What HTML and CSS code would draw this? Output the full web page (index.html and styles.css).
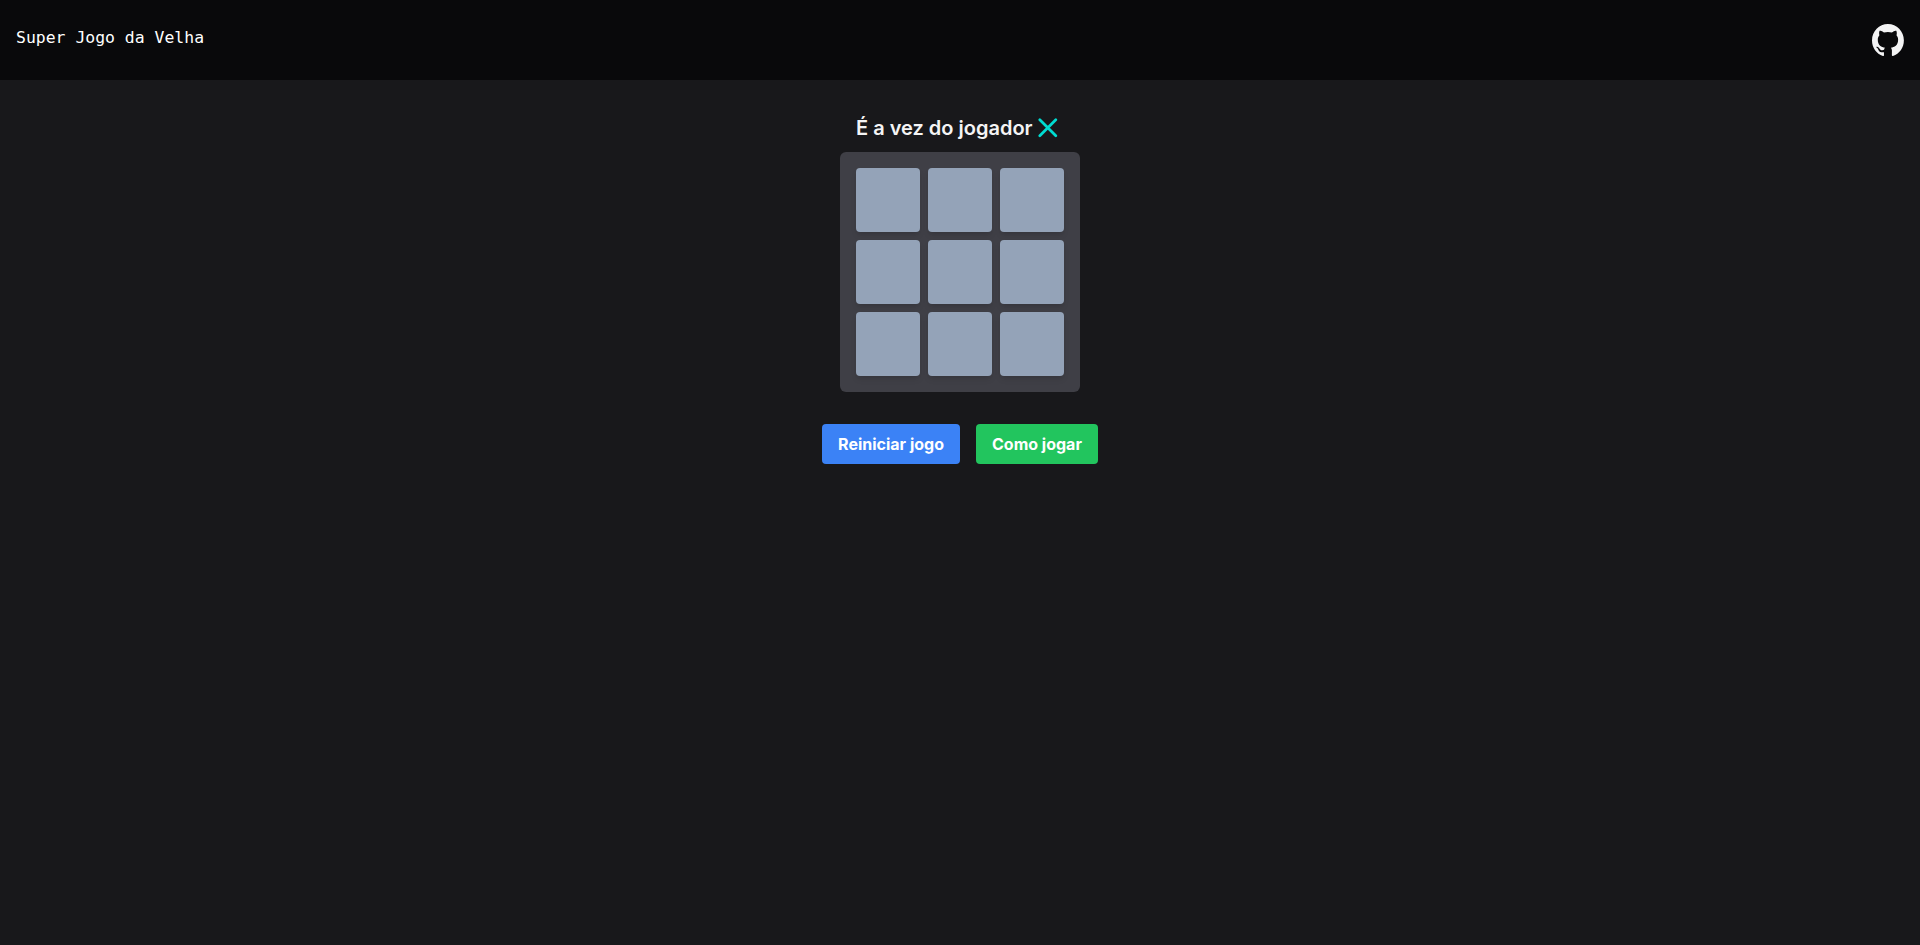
FILE: index.html
```
<!DOCTYPE html>
<html lang="pt-BR">
<head>
<meta charset="utf-8">
<title>Super Jogo da Velha</title>
<link rel="stylesheet" href="styles.css">
</head>
<body>
<header class="header">
  <h1 class="brand">Super Jogo da Velha</h1>
  <a class="github" href="#" aria-label="GitHub">
    <svg width="32" height="32" viewBox="0 0 98 96" preserveAspectRatio="none" fill="currentColor"><path fill-rule="evenodd" d="M48.854 0C21.839 0 0 22 0 49.217c0 21.756 13.993 40.172 33.405 46.69 2.427.49 3.316-1.059 3.316-2.362 0-1.141-.08-5.052-.08-9.127-13.59 2.934-16.42-5.867-16.42-5.867-2.184-5.704-5.42-7.17-5.42-7.17-4.448-3.015.324-3.015.324-3.015 4.934.326 7.523 5.052 7.523 5.052 4.367 7.496 11.404 5.378 14.235 4.074.404-3.178 1.699-5.378 3.074-6.6-10.839-1.141-22.243-5.378-22.243-24.283 0-5.378 1.94-9.778 5.014-13.2-.485-1.222-2.184-6.275.486-13.038 0 0 4.125-1.304 13.426 5.052a46.97 46.97 0 0 1 12.214-1.63c4.125 0 8.33.571 12.213 1.63 9.302-6.356 13.427-5.052 13.427-5.052 2.67 6.763.97 11.816.485 13.038 3.155 3.422 5.015 7.822 5.015 13.2 0 18.905-11.404 23.06-22.324 24.283 1.78 1.548 3.316 4.481 3.316 9.126 0 6.6-.08 11.897-.08 13.526 0 1.304.89 2.853 3.316 2.364 19.412-6.52 33.405-24.935 33.405-46.691C97.707 22 75.788 0 48.854 0z"/></svg>
  </a>
</header>
<main class="main">
  <section class="game">
    <h2 class="turn">
      <span>É a vez do jogador</span>
      <svg width="20" height="20" viewBox="0 0 20 20" fill="none" stroke="#00dcd2" stroke-width="2.7" stroke-linecap="round"><path d="M1.8 1.8 17.8 17.8M17.8 1.8 1.8 17.8"/></svg>
    </h2>
    <div class="board">
      <button class="cell"></button><button class="cell"></button><button class="cell"></button>
      <button class="cell"></button><button class="cell"></button><button class="cell"></button>
      <button class="cell"></button><button class="cell"></button><button class="cell"></button>
    </div>
  </section>
  <div class="actions">
    <button class="btn btn-reset">Reiniciar jogo</button>
    <button class="btn btn-help">Como jogar</button>
  </div>
</main>
</body>
</html>
```
FILE: styles.css
```
* { box-sizing: border-box; }
body {
  margin: 0;
  min-height: 100vh;
  background: #18181b;
  color: #f4f4f5;
  font-family: Inter, sans-serif;
}
.header {
  display: flex;
  align-items: center;
  justify-content: space-between;
  height: 80px;
  padding: 0 16px;
  background: #09090b;
}
.brand {
  margin: 0;
  padding-bottom: 4px;
  font: 400 16.45px/28px "DejaVu Sans Mono", monospace;
  color: #fff;
}
.github { display: flex; color: #f4f4f5; }
.main {
  display: flex;
  flex-direction: column;
  align-items: center;
  gap: 32px;
  padding-top: 32px;
}
.turn {
  display: flex;
  align-items: center;
  gap: 5px;
  height: 32px;
  margin: 0 0 8px;
  padding-left: 16px;
  font-size: 20px;
  font-weight: 600;
  line-height: 28px;
  white-space: nowrap;
}
.board {
  display: grid;
  grid-template-columns: repeat(3, 64px);
  gap: 8px;
  padding: 16px;
  background: #3f3f46;
  border-radius: 6px;
}
.cell {
  height: 64px;
  padding: 0;
  border: 0;
  border-radius: 4px;
  background: #94a3b8;
  box-shadow: 0 4px 6px -1px rgb(0 0 0 / .1), 0 2px 4px -2px rgb(0 0 0 / .1);
}
.actions { display: flex; gap: 16px; }
.btn {
  padding: 8px 16px;
  border: 0;
  border-radius: 4px;
  color: #fff;
  font: 700 16px/24px Inter, sans-serif;
}
.btn-reset { background: #3b82f6; }
.btn-help { background: #22c55e; }
```
